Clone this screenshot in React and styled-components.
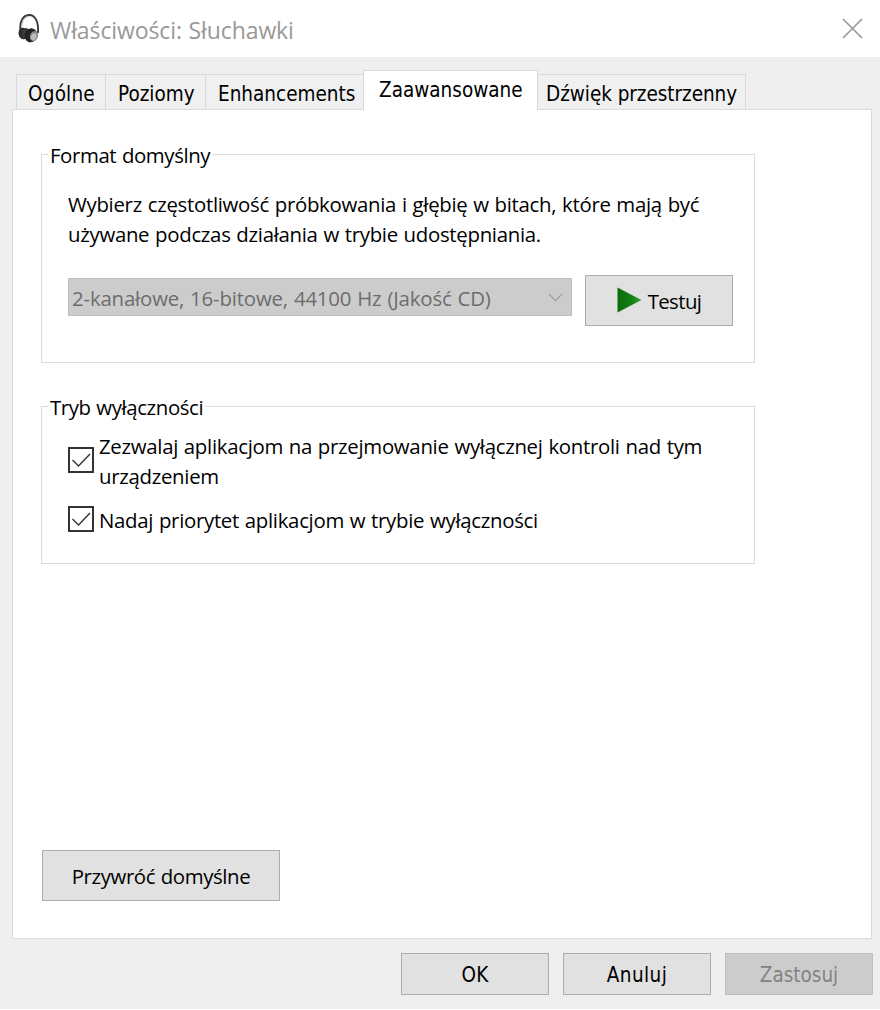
import React from "react";
import styled, { createGlobalStyle } from "styled-components";

const GlobalStyle = createGlobalStyle`
    * {
        box-sizing: border-box;
    }
    body {
        margin: 0;
        background: #fff;
        color: #000;
        font-family: "Open Sans", "Noto Sans", sans-serif;
        font-size: 20.4px;
        line-height: 30px;
        letter-spacing: -0.3px;
        word-spacing: 0.8px;
    }
`;

const Dialog = styled.div`
    width: 880px;
    height: 1009px;
    display: flex;
    flex-direction: column;
    background: #efefef;
    white-space: nowrap;
`;

const TitleBar = styled.header`
    height: 57px;
    flex: none;
    display: flex;
    align-items: center;
    padding: 0 17px 0 17px;
    background: #fff;
`;

const Title = styled.h1`
    margin: 2px auto 0 9px;
    font-size: 23px;
    font-weight: 400;
    letter-spacing: -0.1px;
    color: #999;
`;

const CloseButton = styled.button`
    display: flex;
    margin: 0 0 1px;
    padding: 0;
    border: 0;
    background: none;
`;

const Tabs = styled.nav`
    height: 52px;
    flex: none;
    display: flex;
    align-items: flex-end;
    padding-left: 16px;
    word-spacing: 0;
`;

const Tab = styled.div`
    width: ${(p) => p.$width}px;
    height: ${(p) => (p.$active ? 40 : 35)}px;
    margin-bottom: ${(p) => (p.$active ? -1 : 0)}px;
    padding: 4px 0 0 ${(p) => p.$indent}px;
    border: 1px solid #d9d9d9;
    border-width: ${(p) => (p.$last || p.$active ? "1px 1px 0 1px" : "1px 0 0 1px")};
    ${(p) => p.$afterActive && "border-left: 0;"}
    background: ${(p) => (p.$active ? "#fff" : "#f0f0f0")};
    z-index: ${(p) => (p.$active ? 1 : 0)};
    font-family: "DejaVu Sans Condensed", "DejaVu Sans", sans-serif;
    font-size: 20.5px;
    letter-spacing: ${(p) => p.$spacing || 0}px;
`;

const Page = styled.main`
    height: 830px;
    flex: none;
    margin: 0 8px 0 12px;
    padding: 44px 28px 0;
    border: 1px solid #d9d9d9;
    background: #fff;
`;

const Group = styled.section`
    width: 714px;
    height: ${(p) => p.$height}px;
    margin-bottom: ${(p) => p.$gap}px;
    border: 1px solid #dcdcdc;
`;

const Legend = styled.h2`
    width: max-content;
    margin: -15px 0 0 6px;
    padding: 0 2px;
    background: #fff;
    font-size: inherit;
    font-weight: 400;
    letter-spacing: -0.4px;
`;

const Description = styled.p`
    margin: 19px 0 0 26px;
`;

const FormatRow = styled.div`
    display: flex;
    align-items: flex-start;
    margin: 26px 0 0 26px;
`;

const Combo = styled.div`
    width: 504px;
    height: 38px;
    display: flex;
    align-items: center;
    justify-content: space-between;
    margin: 3px 13px 0 0;
    padding: 1px 8px 0 3px;
    border: 1px solid #bfbfbf;
    background: #ccc;
    color: #6d6d6d;
    letter-spacing: -0.17px;
`;

const Button = styled.button`
    width: ${(p) => p.$width || 148}px;
    height: 51px;
    display: flex;
    align-items: center;
    justify-content: center;
    padding: 0;
    border: 1px solid #adadad;
    background: #e1e1e1;
    color: #000;
    font: inherit;
    letter-spacing: -0.4px;
    word-spacing: inherit;
`;

const TestButton = styled(Button)`
    gap: 6px;
    letter-spacing: -0.6px;

    svg {
        margin-top: -2px;
    }
`;

const RestoreButton = styled(Button)`
    margin-left: 1px;
`;

const CheckRow = styled.label`
    display: flex;
    align-items: flex-start;
    gap: 5px;
    margin: ${(p) => p.$top}px 0 0 26px;
`;

const CheckBox = styled.span`
    width: 26px;
    height: 26px;
    display: flex;
    margin-top: ${(p) => p.$offset}px;
    border: 2px solid #333;
`;

const Footer = styled.footer`
    display: flex;
    justify-content: flex-end;
    gap: 14px;
    padding: 14px 7px 0 0;
`;

const FooterButton = styled(Button)`
    height: 42px;
    padding: 2px 0 0;
    font-family: "DejaVu Sans Condensed", "DejaVu Sans", sans-serif;
    font-size: 20.5px;
    letter-spacing: ${(p) => p.$spacing || 0}px;

    &:disabled {
        border-color: #bfbfbf;
        background: #ccc;
        color: #838383;
    }
`;

const tabs = [
    { label: "Ogólne", width: 89, indent: 11, spacing: 0.2 },
    { label: "Poziomy", width: 100, indent: 12 },
    { label: "Enhancements", width: 158, indent: 12 },
    { label: "Zaawansowane", width: 175, indent: 15, active: true },
    { label: "Dźwięk przestrzenny", width: 208, indent: 8, spacing: -0.05, afterActive: true, last: true },
];

const Headphones = () => (
    <svg width="24" height="32" viewBox="0 0 24 32" fill="none">
        <path d="M3.600 18C2 8 6.500 2.300 12 2C18 1.800 21.800 8.500 21 20" stroke="#3a3a3a" strokeWidth="1.900" />
        <path d="M4.800 13C5.200 7.500 8 3.800 12 3.300" stroke="#999" strokeWidth="0.700" />
        <ellipse cx="6.200" cy="20.500" rx="4.700" ry="5.800" fill="#2b2b2b" transform="rotate(-12 6.200 20.500)" />
        <ellipse cx="9" cy="20.500" rx="4" ry="5.500" fill="#3a3a3a" />
        <ellipse cx="14" cy="22.300" rx="6.300" ry="7" fill="#222" transform="rotate(20 14 22.300)" />
        <ellipse cx="17" cy="23" rx="4" ry="5.200" fill="#8a8a8a" transform="rotate(24 17 23)" />
        <ellipse cx="16.800" cy="23.700" rx="2.600" ry="3.500" fill="#bdbdbd" transform="rotate(24 16.800 23.700)" />
    </svg>
);

const CloseIcon = () => (
    <svg width="21" height="21" viewBox="0 0 21 21">
        <path d="M1 1L20 20M20 1L1 20" stroke="#999" strokeWidth="1.700" />
    </svg>
);

const Chevron = () => (
    <svg width="15" height="9" viewBox="0 0 15 9" fill="none">
        <path d="M1 1L7.500 7.500L14 1" stroke="#a0a0a0" strokeWidth="1.300" />
    </svg>
);

const Play = () => (
    <svg width="25" height="26" viewBox="0 0 25 26">
        <defs>
            <linearGradient id="play" x1="0" y1="0" x2="1" y2="0">
                <stop offset="0" stopColor="#0b6b0b" />
                <stop offset="0.600" stopColor="#138013" />
                <stop offset="1" stopColor="#3f9a3f" />
            </linearGradient>
        </defs>
        <path d="M0.500 0.500L24.500 13L0.500 25.500Z" fill="url(#play)" />
    </svg>
);

const Check = () => (
    <svg width="22" height="22" viewBox="0 0 22 22" fill="none">
        <path d="M2.500 11L8.500 17L20 5" stroke="#333" strokeWidth="1.400" />
    </svg>
);

export default function App() {
    return (
        <>
            <GlobalStyle />
            <Dialog>
                <TitleBar>
                    <Headphones />
                    <Title>Właściwości: Słuchawki</Title>
                    <CloseButton aria-label="Zamknij"><CloseIcon /></CloseButton>
                </TitleBar>
                <Tabs>
                    {tabs.map((t) => (
                        <Tab
                            key={t.label}
                            $width={t.width}
                            $indent={t.indent}
                            $spacing={t.spacing}
                            $active={t.active}
                            $afterActive={t.afterActive}
                            $last={t.last}
                        >
                            {t.label}
                        </Tab>
                    ))}
                </Tabs>
                <Page>
                    <Group $height={209} $gap={43}>
                        <Legend>Format domyślny</Legend>
                        <Description>
                            Wybierz częstotliwość próbkowania i głębię w bitach, które mają być
                            <br />
                            używane podczas działania w trybie udostępniania.
                        </Description>
                        <FormatRow>
                            <Combo>
                                2-kanałowe, 16-bitowe, 44100 Hz (Jakość CD)
                                <Chevron />
                            </Combo>
                            <TestButton><Play />Testuj</TestButton>
                        </FormatRow>
                    </Group>
                    <Group $height={158} $gap={286}>
                        <Legend>Tryb wyłączności</Legend>
                        <CheckRow $top={9}>
                            <CheckBox $offset={16}><Check /></CheckBox>
                            <span>
                                Zezwalaj aplikacjom na przejmowanie wyłącznej kontroli nad tym
                                <br />
                                urządzeniem
                            </span>
                        </CheckRow>
                        <CheckRow $top={14}>
                            <CheckBox $offset={1}><Check /></CheckBox>
                            <span>Nadaj priorytet aplikacjom w trybie wyłączności</span>
                        </CheckRow>
                    </Group>
                    <RestoreButton $width={238}>Przywróć domyślne</RestoreButton>
                </Page>
                <Footer>
                    <FooterButton $spacing={0.3}>OK</FooterButton>
                    <FooterButton $spacing={0.4}>Anuluj</FooterButton>
                    <FooterButton disabled>Zastosuj</FooterButton>
                </Footer>
            </Dialog>
        </>
    );
}
